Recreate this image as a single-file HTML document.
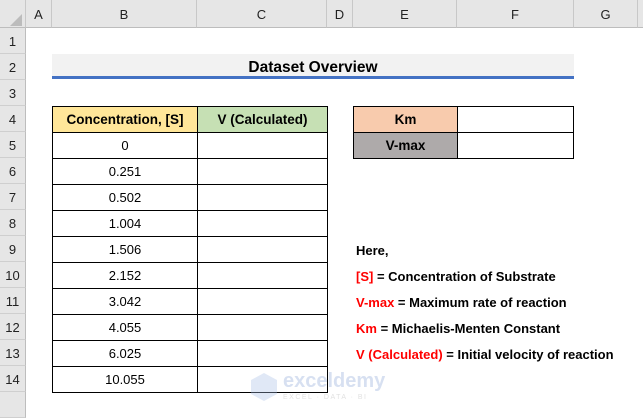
<!DOCTYPE html>
<html><head><style>
*{margin:0;padding:0;box-sizing:border-box}
body{width:643px;height:418px;overflow:hidden;background:#fff;font-family:"Liberation Sans",sans-serif;position:relative}
.ch{position:absolute;top:0;height:28px;background:#e6e6e6;border-right:1px solid #c8c8c8;border-bottom:1px solid #bdbdbd;font-size:13px;color:#222;text-align:center;line-height:30px}
.rh{position:absolute;left:0;width:26px;height:26px;background:#e6e6e6;border-bottom:1px solid #cfcfcf;border-right:1px solid #bdbdbd;font-size:13px;color:#222;text-align:center;line-height:28px}
.c{position:absolute;border:1px solid #000;font-size:13px;text-align:center;line-height:25px;color:#000}
.b{font-weight:bold;font-size:13.5px}
.t{position:absolute;left:356px;font-size:13px;font-weight:bold;color:#000;white-space:nowrap}
.r{color:#f00}
</style></head><body>
<div class="ch" style="left:0;width:26px"><svg width="26" height="28"><polygon points="22,14 22,26 10,26" fill="#bcbcbc"/></svg></div>
<div class="ch" style="left:26px;width:26px">A</div>
<div class="ch" style="left:52px;width:145px">B</div>
<div class="ch" style="left:197px;width:130px">C</div>
<div class="ch" style="left:327px;width:26px">D</div>
<div class="ch" style="left:353px;width:104px">E</div>
<div class="ch" style="left:457px;width:117px">F</div>
<div class="ch" style="left:574px;width:64px">G</div>
<div class="ch" style="left:638px;width:10px"></div>
<div class="rh" style="top:28px">1</div><div class="rh" style="top:54px">2</div><div class="rh" style="top:80px">3</div><div class="rh" style="top:106px">4</div><div class="rh" style="top:132px">5</div><div class="rh" style="top:158px">6</div><div class="rh" style="top:184px">7</div><div class="rh" style="top:210px">8</div><div class="rh" style="top:236px">9</div><div class="rh" style="top:262px">10</div><div class="rh" style="top:288px">11</div><div class="rh" style="top:314px">12</div><div class="rh" style="top:340px">13</div><div class="rh" style="top:366px">14</div><div class="rh" style="top:392px;height:26px"></div>
<div style="position:absolute;left:52px;top:54px;width:522px;height:25px;background:#f2f2f2;border-bottom:3px solid #4472c4;text-align:center;font-weight:bold;font-size:15.5px;line-height:27px">Dataset Overview</div>
<div class="c b" style="left:52px;top:106px;width:146px;height:27px;background:#ffe699">Concentration, [S]</div>
<div class="c b" style="left:197px;top:106px;width:131px;height:27px;background:#c6e0b4">V (Calculated)</div>
<div class="c" style="left:52px;top:132px;width:146px;height:27px">0</div><div class="c" style="left:197px;top:132px;width:131px;height:27px"></div>
<div class="c" style="left:52px;top:158px;width:146px;height:27px">0.251</div><div class="c" style="left:197px;top:158px;width:131px;height:27px"></div>
<div class="c" style="left:52px;top:184px;width:146px;height:27px">0.502</div><div class="c" style="left:197px;top:184px;width:131px;height:27px"></div>
<div class="c" style="left:52px;top:210px;width:146px;height:27px">1.004</div><div class="c" style="left:197px;top:210px;width:131px;height:27px"></div>
<div class="c" style="left:52px;top:236px;width:146px;height:27px">1.506</div><div class="c" style="left:197px;top:236px;width:131px;height:27px"></div>
<div class="c" style="left:52px;top:262px;width:146px;height:27px">2.152</div><div class="c" style="left:197px;top:262px;width:131px;height:27px"></div>
<div class="c" style="left:52px;top:288px;width:146px;height:27px">3.042</div><div class="c" style="left:197px;top:288px;width:131px;height:27px"></div>
<div class="c" style="left:52px;top:314px;width:146px;height:27px">4.055</div><div class="c" style="left:197px;top:314px;width:131px;height:27px"></div>
<div class="c" style="left:52px;top:340px;width:146px;height:27px">6.025</div><div class="c" style="left:197px;top:340px;width:131px;height:27px"></div>
<div class="c" style="left:52px;top:366px;width:146px;height:27px">10.055</div><div class="c" style="left:197px;top:366px;width:131px;height:27px"></div>
<div class="c b" style="left:353px;top:106px;width:105px;height:27px;background:#f8cbad">Km</div>
<div class="c" style="left:457px;top:106px;width:117px;height:27px"></div>
<div class="c b" style="left:353px;top:132px;width:105px;height:27px;background:#aeaaaa">V-max</div>
<div class="c" style="left:457px;top:132px;width:117px;height:27px"></div>
<div class="t" style="top:243px">Here,</div>
<div class="t" style="top:269px"><span class="r">[S]</span> = Concentration of Substrate</div>
<div class="t" style="top:295px"><span class="r">V-max</span> = Maximum rate of reaction</div>
<div class="t" style="top:321px"><span class="r">Km</span> = Michaelis-Menten Constant</div>
<div class="t" style="top:347px"><span class="r">V (Calculated)</span> = Initial velocity of reaction</div>
<div style="position:absolute;left:250px;top:372px;opacity:.35">
<svg width="28" height="30" style="position:absolute;left:0;top:0"><polygon points="14,1 27,8 27,22 14,29 1,22 1,8" fill="#a9bfe6"/></svg>
<div style="position:absolute;left:33px;top:-2px;font-size:20px;font-weight:bold;color:#8ea8d8">exceldemy</div>
<div style="position:absolute;left:33px;top:22px;font-size:7px;color:#aaa;letter-spacing:1.5px;white-space:nowrap">EXCEL · DATA · BI</div>
</div>
</body></html>
